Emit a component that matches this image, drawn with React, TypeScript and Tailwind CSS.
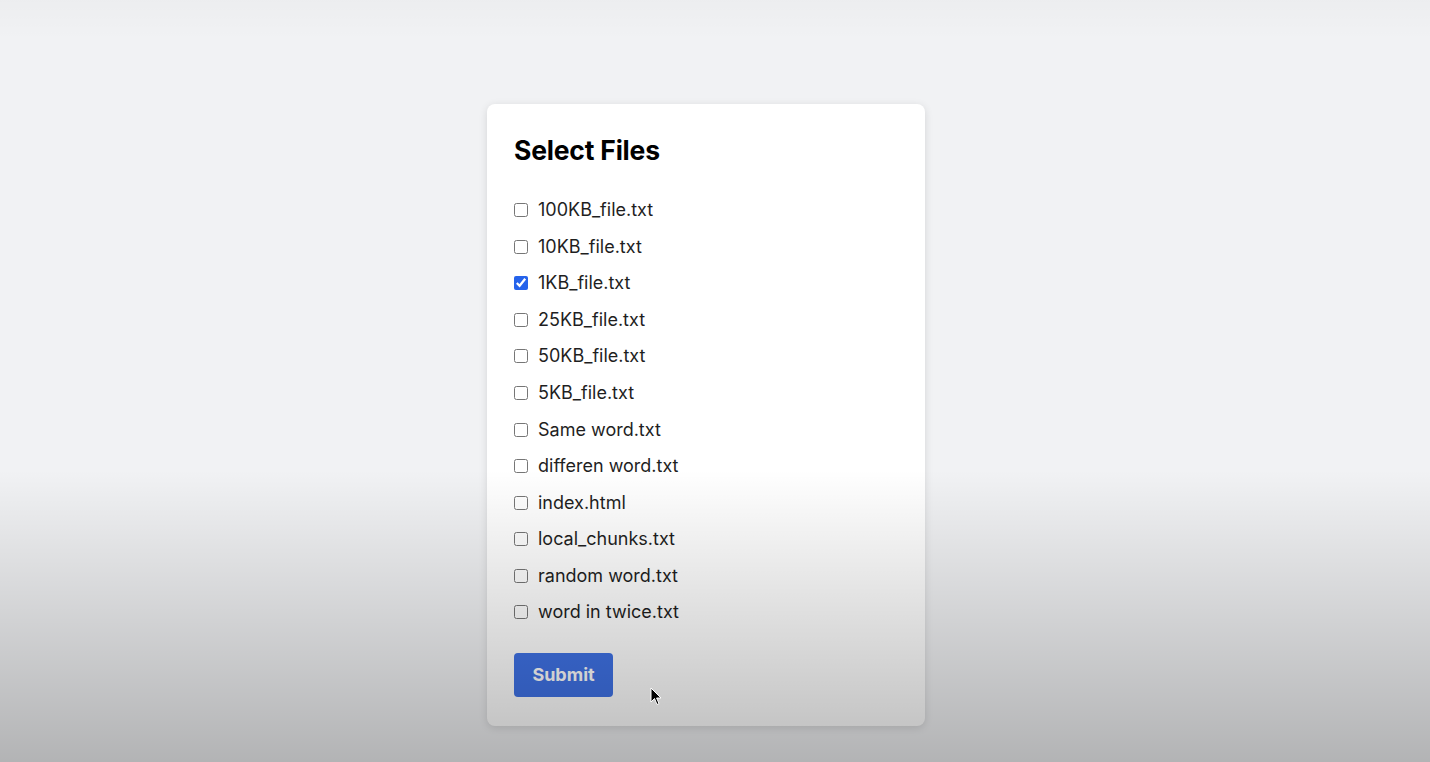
import React, { useState } from 'react';

const files = [
  '100KB_file.txt',
  '10KB_file.txt',
  '1KB_file.txt',
  '25KB_file.txt',
  '50KB_file.txt',
  '5KB_file.txt',
  'Same word.txt',
  'differen word.txt',
  'index.html',
  'local_chunks.txt',
  'random word.txt',
  'word in twice.txt',
];

const App: React.FC = () => {
  const [selected, setSelected] = useState<string[]>(['1KB_file.txt']);

  const toggle = (name: string) => {
    setSelected(prev => (prev.includes(name) ? prev.filter(f => f !== name) : [...prev, name]));
  };

  return (
    <div
      className="relative min-h-[762px] w-full overflow-hidden bg-[#f1f2f4] flex justify-center pr-[18px]"
      style={{ fontFamily: 'Inter, "Noto Sans", sans-serif' }}
    >
      <div className="mt-[104px] h-[622px] w-[438px] rounded-lg bg-white shadow-[0_2px_8px_rgba(0,0,0,0.12)] px-[27px] pt-[28px]">
        <h2 className="text-[26.5px] leading-[36px] font-bold text-black tracking-[-0.2px]">Select Files</h2>
        <div className="mt-[24px] flex flex-col">
          {files.map(name => (
            <label key={name} className="flex h-[36.55px] items-center gap-[10px] cursor-pointer">
              <input
                type="checkbox"
                checked={selected.includes(name)}
                onChange={() => toggle(name)}
                className="m-0 h-[14px] w-[14px] accent-[#2563eb]"
              />
              <span className="text-[18px] leading-[24px] text-[#1f1f1f]">{name}</span>
            </label>
          ))}
        </div>
        <button className="mt-[22px] h-[44px] w-[99px] rounded-[4px] bg-[#3f72e6] text-[18px] font-bold text-white">
          Submit
        </button>
      </div>

      {/* video-style darkening toward the bottom */}
      <div className="pointer-events-none absolute inset-0 bg-[linear-gradient(to_bottom,rgba(0,0,0,0.02)_0px,rgba(0,0,0,0)_40px,rgba(0,0,0,0)_470px,rgba(0,0,0,0.08)_560px,rgba(0,0,0,0.26)_762px)]" />

      {/* mouse cursor */}
      <svg className="pointer-events-none absolute left-[650px] top-[687px]" width="12" height="20" viewBox="0 0 12 20">
        <path d="M1 1 L1 15 L4.5 11.5 L7 17.5 L9 16.6 L6.6 11 L11 11 Z" fill="#000" stroke="#fff" strokeWidth="1" />
      </svg>
    </div>
  );
};

export default App;
